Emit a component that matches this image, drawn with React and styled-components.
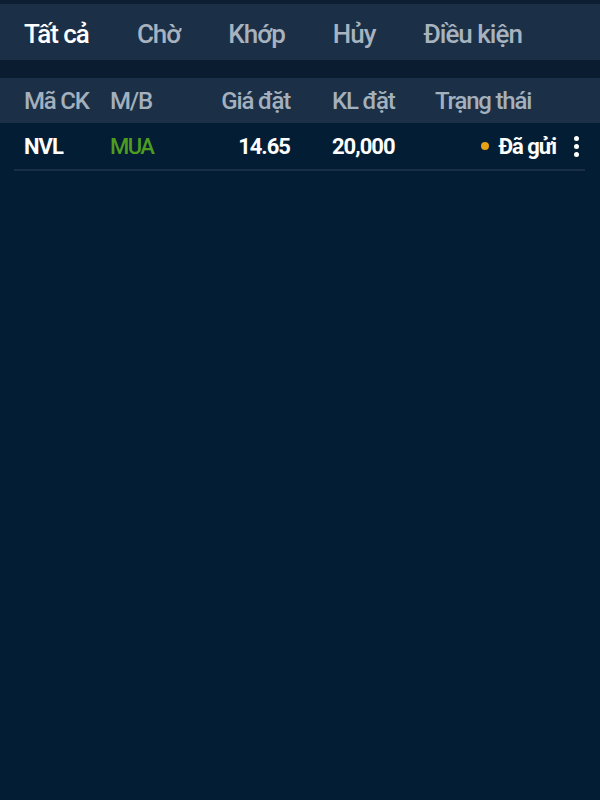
import React from 'react';
import styled, { createGlobalStyle } from 'styled-components';

const GlobalStyle = createGlobalStyle`
  html, body {
    margin: 0;
    padding: 0;
    background: #021d34;
  }
  #root {
    min-height: 800px;
  }
`;

const Screen = styled.div`
  width: 600px;
  height: 800px;
  background-color: #021d34;
  font-family: Roboto, "Liberation Sans", sans-serif;
  border-top: 4px solid #0c1e31;
  box-sizing: border-box;
  overflow: hidden;
`;

const TabBar = styled.div`
  display: flex;
  align-items: center;
  gap: 48px;
  height: 53px;
  padding: 3px 0 0 24px;
  background-color: #1b2f46;
  border-bottom: 18px solid #0a1c2f;
`;

const Tab = styled.div`
  font-size: 26px;
  font-weight: 500;
  letter-spacing: -1px;
  color: ${props => (props.$active ? '#ffffff' : '#a7b3bf')};
`;

const TableGrid = styled.div`
  display: grid;
  grid-template-columns: 86px 70px 110px 145px 121px 1fr;
  align-items: center;
`;

const HeaderRow = styled(TableGrid)`
  height: 45px;
  padding-left: 24px;
  background-color: #1b2f46;
`;

const HeadCell = styled.div`
  font-size: 24px;
  font-weight: 500;
  letter-spacing: -1.2px;
  color: #a3b0bd;
  text-align: ${props => (props.$right ? 'right' : 'left')};
  padding-left: ${props => props.$indent || 0}px;
`;

const OrderRow = styled(TableGrid)`
  height: 46px;
  margin: 0 15px 0 14px;
  padding-left: 10px;
  border-bottom: 2px solid #1a2e45;
`;

const Cell = styled.div`
  font-size: 22px;
  font-weight: ${props => props.$weight || 700};
  letter-spacing: ${props => props.$tight ? -1.6 : -1}px;
  color: ${props => props.$color || '#ffffff'};
  text-align: ${props => (props.$right ? 'right' : 'left')};
  padding-left: ${props => props.$indent || 0}px;
`;

const Status = styled.div`
  display: flex;
  align-items: center;
  justify-content: flex-end;
  gap: 9px;
  font-size: 22px;
  font-weight: 700;
  letter-spacing: -1px;
  color: #ffffff;
`;

const Dot = styled.span`
  width: 8px;
  height: 8px;
  border-radius: 50%;
  background-color: #e8a015;
`;

const Kebab = styled.div`
  justify-self: end;
  margin-right: 6px;
  display: flex;
  flex-direction: column;
  gap: 3px;

  span {
    width: 5px;
    height: 5px;
    border-radius: 50%;
    background-color: #ffffff;
  }
`;

const tabs = ['Tất cả', 'Chờ', 'Khớp', 'Hủy', 'Điều kiện'];

export default function App() {
  return (
    <>
      <GlobalStyle />
      <Screen>
        <TabBar>
          {tabs.map((t, i) => (
            <Tab key={t} $active={i === 0}>{t}</Tab>
          ))}
        </TabBar>
        <HeaderRow>
          <HeadCell>Mã CK</HeadCell>
          <HeadCell>M/B</HeadCell>
          <HeadCell $right>Giá đặt</HeadCell>
          <HeadCell $indent={42}>KL đặt</HeadCell>
          <HeadCell>Trạng thái</HeadCell>
          <div />
        </HeaderRow>
        <OrderRow>
          <Cell>NVL</Cell>
          <Cell $color="#4e9c1f" $weight={500} $tight>MUA</Cell>
          <Cell $right>14.65</Cell>
          <Cell $indent={42}>20,000</Cell>
          <Status>
            <Dot />
            Đã gửi
          </Status>
          <Kebab>
            <span />
            <span />
            <span />
          </Kebab>
        </OrderRow>
      </Screen>
    </>
  );
}
